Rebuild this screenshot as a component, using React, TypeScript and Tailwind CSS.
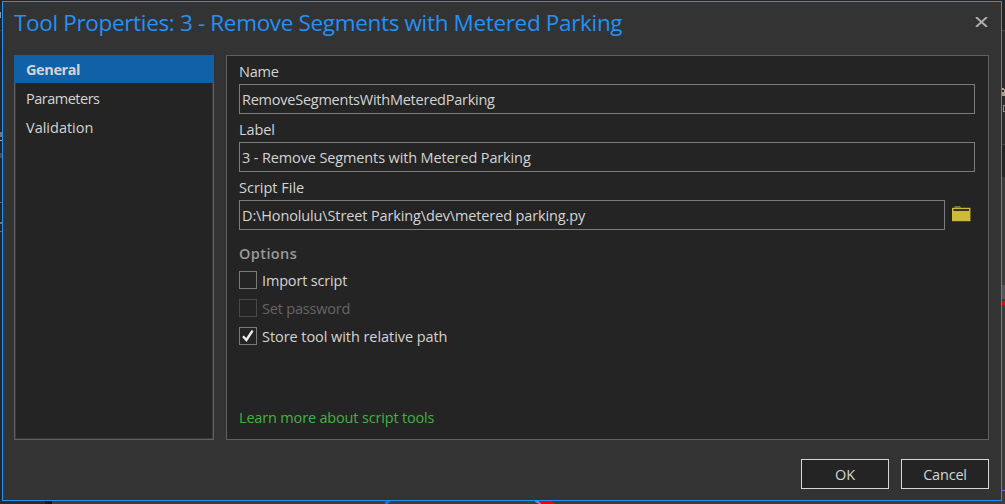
import React from "react";

function Backdrop() {
  return (
    <svg className="absolute inset-0" width="1005" height="504" viewBox="0 0 1005 504" shapeRendering="crispEdges">
      <rect width="1005" height="504" fill="#242424" />
      <rect x="0" y="30" width="2" height="1" fill="#3d3d3d" />
      <path d="M0 12h1v6h-1z" fill="#8d989f" />
      <path d="M0 132h2v5h-2z" fill="#6f7672" />
      <rect x="0" y="140" width="2" height="1" fill="#b0b0b0" />
      <rect x="0" y="153" width="2" height="5" fill="#4b4b4b" />
      <rect x="0" y="202" width="2" height="1" fill="#666" />
      <rect x="0" y="222" width="2" height="2" fill="#5f7892" />
      <rect x="0" y="231" width="2" height="1" fill="#666" />
      <rect x="1002" y="30" width="3" height="115" fill="#2d2d2d" />
      <rect x="1002" y="30" width="3" height="1" fill="#444" />
      <path d="M1002 88h2v1h1v7h-3v-4h2v-2h-2z" fill="#a9a294" />
      <path d="M1003 105h2v1h-1v5h1v1h-2z" fill="#9c8884" />
      <rect x="1002" y="144" width="3" height="1" fill="#444" />
      <rect x="1002" y="177" width="3" height="327" fill="#3b3b3d" />
      <rect x="1002" y="285" width="3" height="14" fill="#555558" />
      <rect x="1002" y="301" width="3" height="4" fill="#f00008" />
      <rect x="1002" y="490" width="3" height="1" fill="#6c6cd8" />
      <rect x="0" y="501" width="1005" height="3" fill="#403e3f" />
      <rect x="0" y="501" width="45" height="3" fill="#2d2b2d" />
      <rect x="45" y="501" width="7" height="3" fill="#1b181b" />
      <path d="M386 501h4l-2 3h-3z" fill="#3966dc" />
      <path d="M534 501h5l3 3h-3z" fill="#7280d5" />
      <path d="M538 501h12l6 3h-15z" fill="#f00008" />
    </svg>
  );
}

function TextField({ value, className }: { value: string; className: string }) {
  return (
    <div className={`flex h-[30px] items-center border border-[#7c7c7c] bg-[#242424] pl-[2px] pt-[2px] ${className}`}>
      {value}
    </div>
  );
}

function CheckRow({ label, checked, disabled, tracking }: { label: string; checked?: boolean; disabled?: boolean; tracking: string }) {
  return (
    <label className="flex h-7 items-center gap-[5px]">
      <span className={`flex size-[18px] items-center justify-center border ${disabled ? "border-[#484848]" : "border-[#7a7a7a]"}`}>
        {checked && (
          <svg width="12" height="14" viewBox="0 0 12 14" fill="none" stroke="#ececec" strokeWidth="2.4">
            <path d="M1 7.3 4.4 11 10.6 1.7" />
          </svg>
        )}
      </span>
      <span className={`pt-[2px] ${tracking} ${disabled ? "text-[#646464]" : ""}`}>{label}</span>
    </label>
  );
}

function Folder() {
  return (
    <svg className="ml-[7px] mt-[6px]" width="20" height="17" viewBox="0 0 20 17">
      <path d="M0 1.500h2L3 0h5l1 1.500h10V15.500H0z" fill="#6f6529" />
      <path d="M3 .5h5l1 1.300H2.200z" fill="#8c8030" />
      <path d="M0 2h18v13H0z" fill="#cfb93a" />
      <path d="M1.500 3H17v2H1.500z" fill="#34322c" />
    </svg>
  );
}

export default function App() {
  return (
    <div className="relative h-[504px] w-[1005px] overflow-hidden pl-[2px] pt-px font-['Open_Sans',sans-serif] text-[14.5px] leading-5 text-[#d4d4d4]">
      <Backdrop />
      <div className="relative flex h-[500px] w-[1000px] flex-col border border-[#2391f5] bg-[#333333] pl-[11px] pr-3">
        <header className="flex h-[53px] items-start justify-between">
          <h1 className="mt-[5px] whitespace-nowrap text-[22.5px] leading-8 tracking-[-0.34px] text-[#2391f5]">
            Tool Properties: 3 - Remove Segments with Metered Parking
          </h1>
          <svg className="mr-px mt-[15px]" width="13" height="10" viewBox="0 0 13 10" fill="none" stroke="#b0b0b0" strokeWidth="1.900">
            <path d="M1 0 12 10M12 0 1 10" />
          </svg>
        </header>
        <div className="flex h-[385px] gap-3">
          <nav className="flex w-[200px] flex-col border border-t-0 border-[#606060] bg-[#242424]">
            <div className="-mx-px flex h-7 shrink-0 items-center bg-[#1061a8] pl-3 pt-[2px] font-bold tracking-[-0.4px]">
              <span>General</span>
            </div>
            <div className="flex grow flex-col border border-t-0 border-[#3a3a3a] pl-[10px] pt-[1px]">
              <div className="flex h-[29px] items-center tracking-[-0.5px]">Parameters</div>
              <div className="flex h-[29px] items-center">Validation</div>
            </div>
          </nav>
          <main className="flex w-[763px] flex-col border border-[#606060] bg-[#242424] pl-3 pr-[13px]">
            <div className="flex h-7 items-center pt-[3px] tracking-[-0.2px]">Name</div>
            <TextField className="w-[736px] tracking-[-0.24px]" value="RemoveSegmentsWithMeteredParking" />
            <div className="flex h-7 items-center pt-[3px] tracking-[-0.1px]">Label</div>
            <TextField className="w-[736px] tracking-[-0.13px]" value="3 - Remove Segments with Metered Parking" />
            <div className="flex h-7 items-center pt-[3px]">Script File</div>
            <div className="flex">
              <TextField className="w-[706px] tracking-[-0.13px]" value={"D:\\Honolulu\\Street Parking\\dev\\metered parking.py"} />
              <Folder />
            </div>
            <div className="mt-[13px] mb-px flex h-[22px] items-center font-semibold tracking-[0.4px] text-[#9a9a9a]">Options</div>
            <CheckRow label="Import script" tracking="tracking-[-0.16px]" />
            <CheckRow label="Set password" disabled tracking="tracking-[-0.2px]" />
            <CheckRow label="Store tool with relative path" checked tracking="tracking-[-0.06px]" />
            <a className="mt-[58px] leading-5 tracking-[-0.17px] text-[#45b045]">Learn more about script tools</a>
          </main>
        </div>
        <footer className="mt-[19px] flex justify-end gap-3">
          <button className="h-[30px] w-[88px] border border-[#d6d6d6] bg-[#242424] pt-[2px] tracking-[-0.2px]">OK</button>
          <button className="h-[30px] w-[88px] border border-[#d6d6d6] bg-[#242424] pt-[2px] tracking-[-0.2px]">Cancel</button>
        </footer>
      </div>
    </div>
  );
}
